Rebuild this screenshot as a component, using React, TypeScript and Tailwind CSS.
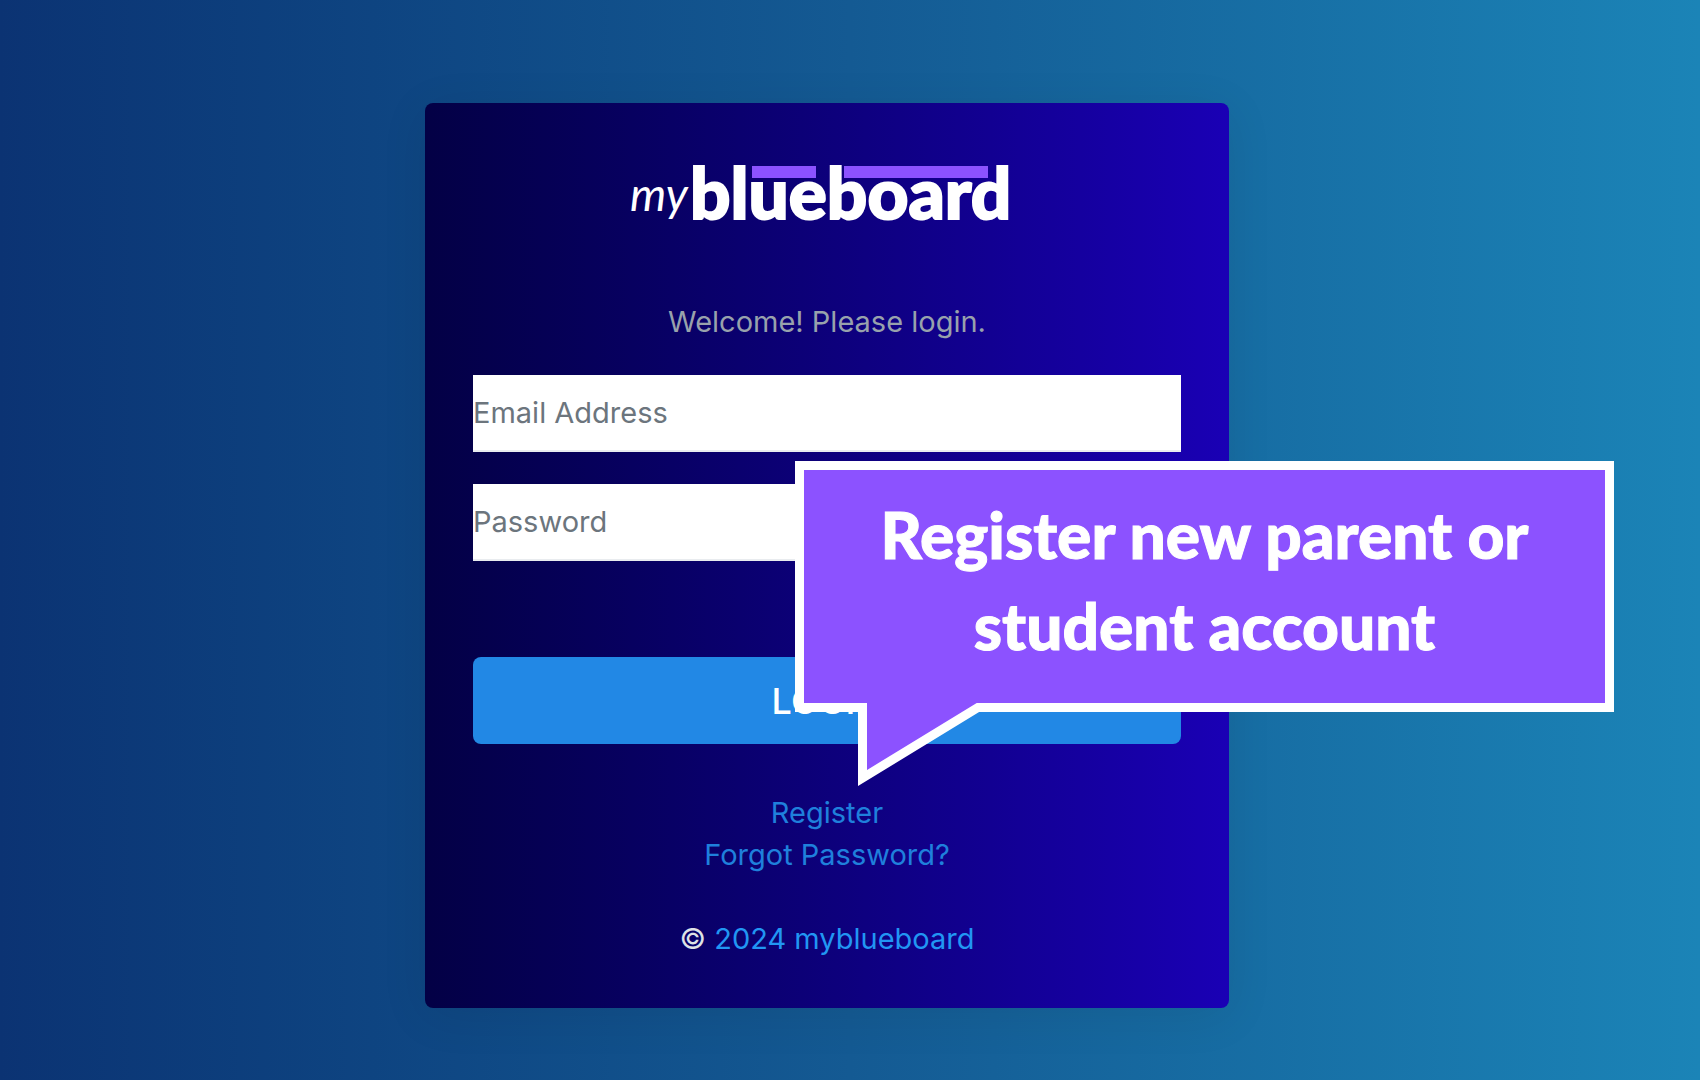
import React, { useState } from 'react';

function Logo() {
  return (
    <svg className="block w-[400px] h-[102px]" viewBox="0 0 400 102" role="img" aria-label="myblueboard">
      <rect x="125" y="15" width="64" height="12" fill="#8c52ff" />
      <rect x="217" y="15" width="144" height="12" fill="#8c52ff" />
      <text x="3" y="60" fill="#ffffff" className="font-['Lato'] italic font-normal text-[46px]">my</text>
      <text
        x="63"
        y="68"
        fill="#ffffff"
        stroke="#ffffff"
        strokeWidth="2"
        className="font-['Lato'] font-black text-[71px]"
      >
        blueboard
      </text>
    </svg>
  );
}

function Callout() {
  return (
    <div className="absolute left-[370px] top-[358px] w-[819px] h-[325px] pointer-events-none">
      <svg className="absolute inset-0 w-full h-full" viewBox="0 0 819 325" fill="none">
        <path
          d="M4.5 4.5 H814.5 V246.5 H183 L67.5 317 V246.5 H4.5 Z"
          fill="#8c52ff"
          stroke="#ffffff"
          strokeWidth="9"
          strokeMiterlimit="10"
        />
      </svg>
      <p className="relative px-12 pt-7 text-center text-white font-['Lato',sans-serif] font-black text-[64px] leading-[91px] [-webkit-text-stroke:1px_#ffffff]">
        Register new parent or
        <br />
        student account
      </p>
    </div>
  );
}

export default function App() {
  const [email, setEmail] = useState('');
  const [password, setPassword] = useState('');

  return (
    <div className="min-h-screen overflow-hidden pt-[103px] pb-[72px] bg-linear-to-r from-[#0b3373] via-[#145a93] to-[#1b84b7] font-['Inter',sans-serif] text-[29px] leading-[42px]">
      <main className="relative ml-[25%] w-[804px] rounded-lg bg-linear-to-r from-[#030045] to-[#1a00b5] p-12 shadow-[0_8px_48px_rgba(0,0,0,0.08)]">
        <div className="flex justify-center">
          <Logo />
        </div>

        <form className="mt-12 flex flex-col" onSubmit={(e) => e.preventDefault()}>
          <p className="mb-8 text-center text-[#98a2ac]">Welcome! Please login.</p>

          <input
            type="email"
            aria-label="Email Address"
            placeholder="Email Address"
            value={email}
            onChange={(e) => setEmail(e.target.value)}
            className="mb-8 h-[77px] w-full bg-white border-b-2 border-[#e9ecef] text-[#212529] placeholder:text-[#6c757d] outline-none"
          />
          <input
            type="password"
            aria-label="Password"
            placeholder="Password"
            value={password}
            onChange={(e) => setPassword(e.target.value)}
            className="h-[77px] w-full bg-white border-b-2 border-[#e9ecef] text-[#212529] placeholder:text-[#6c757d] outline-none"
          />

          <button
            type="submit"
            className="mt-24 h-[87px] w-full rounded-lg bg-[#2288e5] text-white font-medium text-[36px] cursor-pointer"
          >
            LOGIN
          </button>
        </form>

        <nav className="mt-12 flex flex-col items-center text-[#1f80dc]">
          <a href="#register">Register</a>
          <a href="#forgot">Forgot Password?</a>
        </nav>

        <footer className="mt-[42px] text-center text-[#dee2e6]">
          © <a href="#home" className="text-[#2196f3]">2024 myblueboard</a>
        </footer>

        <Callout />
      </main>
    </div>
  );
}
